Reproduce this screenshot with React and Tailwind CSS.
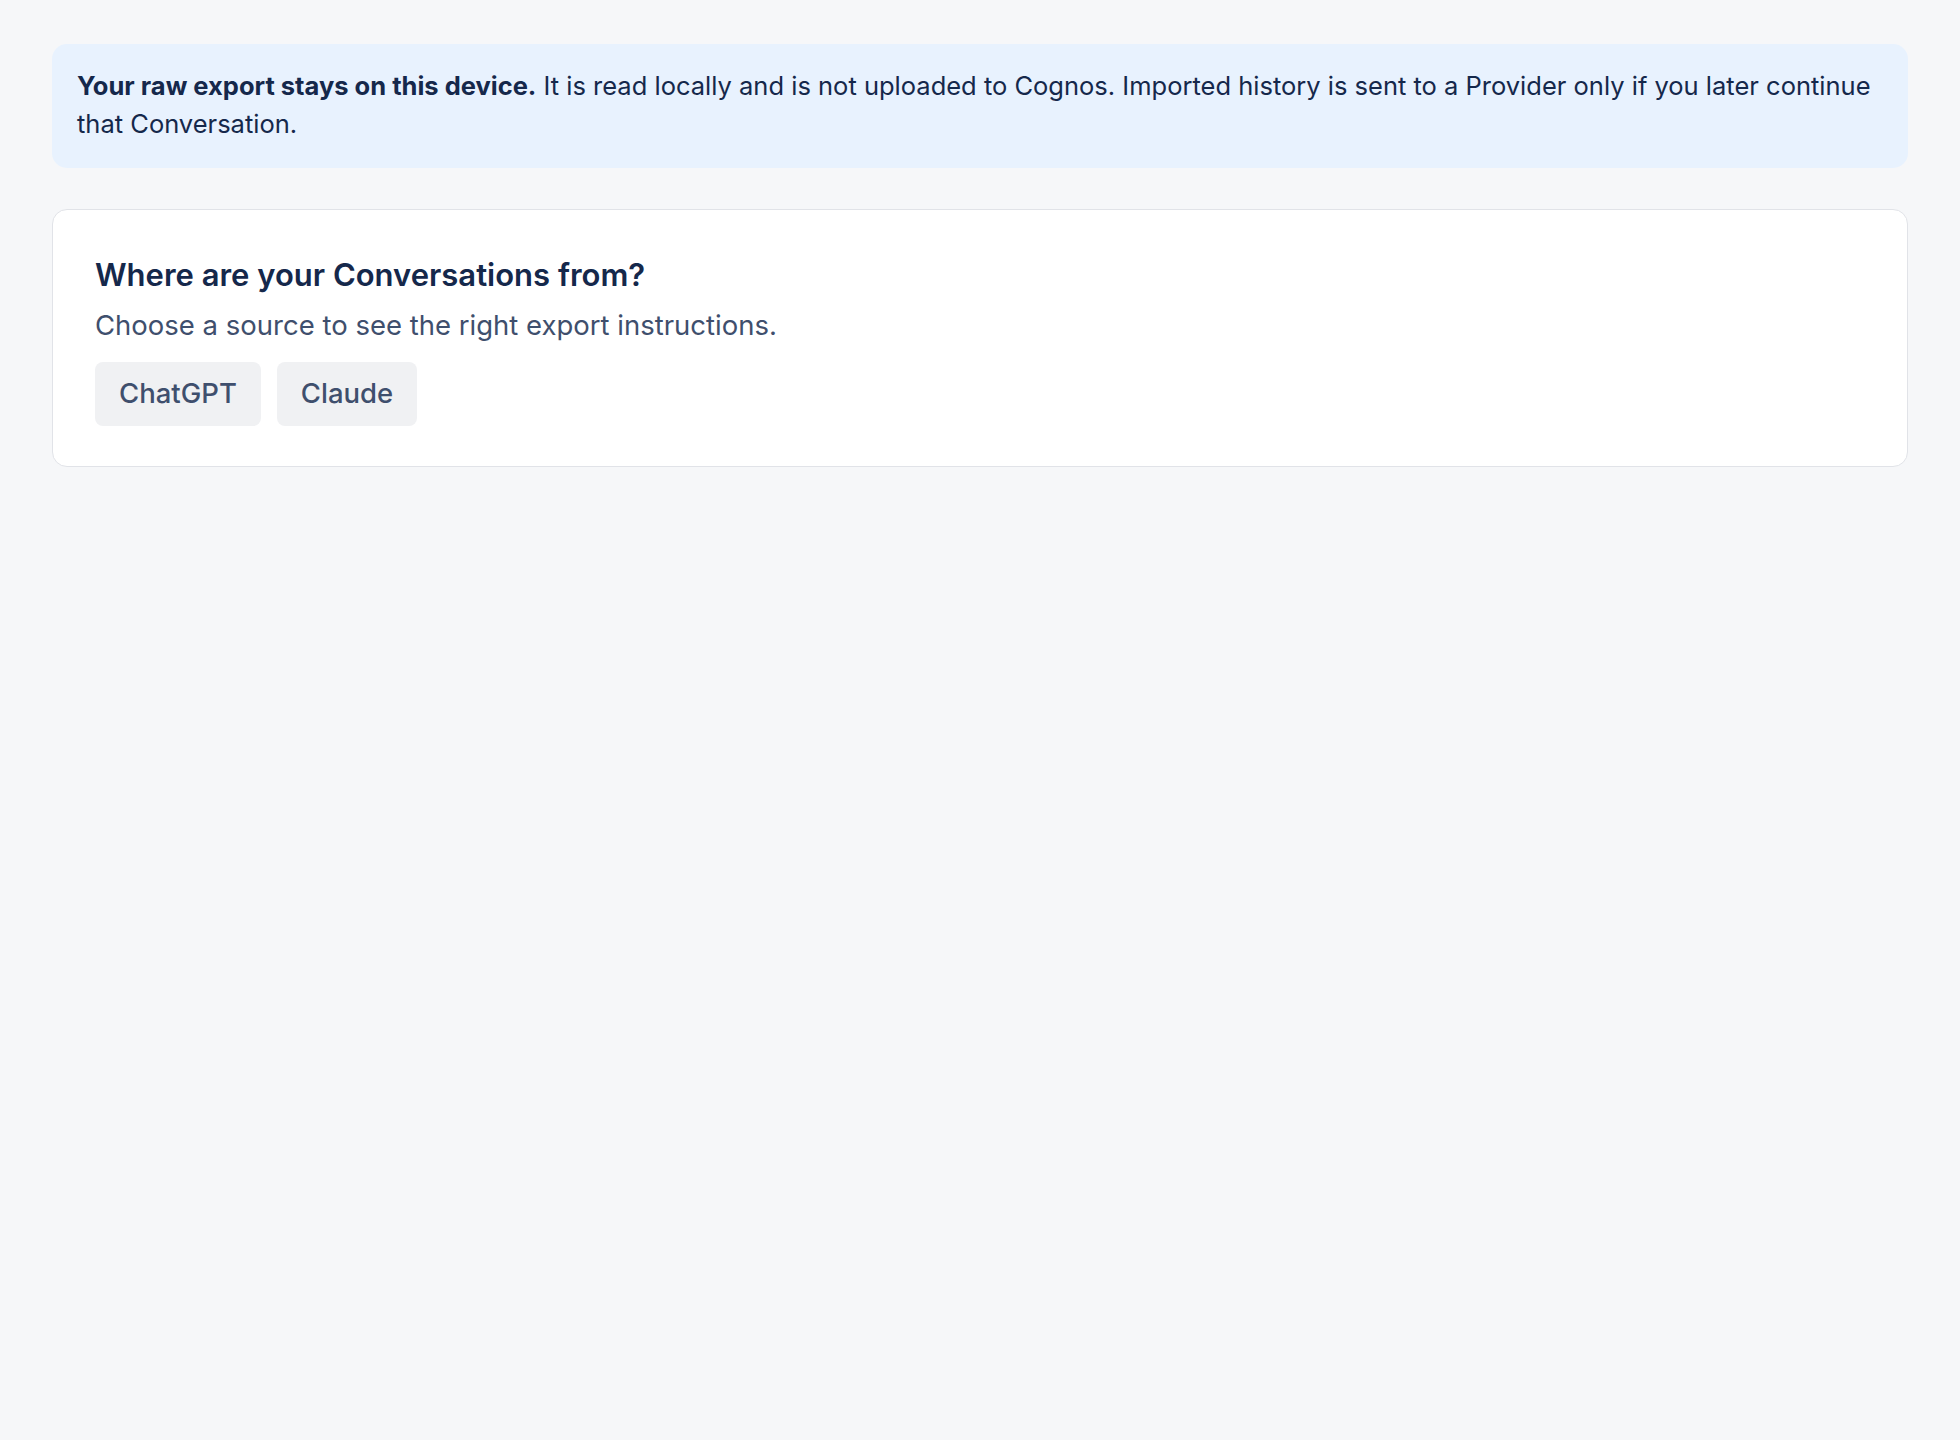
export default function App() {
  return (
    <div className="min-h-screen bg-[#f6f7f9] px-[52px] pt-[44px] font-['Inter',sans-serif] text-[#15284b]">
      <p className="rounded-[15px] bg-[#e8f2fe] px-[25px] pt-[23px] pb-[26px] text-[25.5px] leading-[37.5px]">
        <strong className="font-bold">Your raw export stays on this device.</strong> It is read locally and is not
        uploaded to Cognos. Imported history is sent to a Provider only if you later continue that Conversation.
      </p>

      <section className="mt-[41px] rounded-[15px] border border-[#e1e3e8] bg-white px-[42px] pt-[43px] pb-[40px]">
        <h2 className="text-[31px] font-semibold leading-[44px]">Where are your Conversations from?</h2>
        <p className="mt-[10px] text-[27.5px] leading-[37.5px] text-[#3f4f6d]">
          Choose a source to see the right export instructions.
        </p>
        <div className="mt-[17px] flex gap-4">
          <button className="h-[64px] rounded-[8px] bg-[#f0f1f3] px-[24px] text-[27.5px] font-medium text-[#3f4f6d]">
            ChatGPT
          </button>
          <button className="h-[64px] rounded-[8px] bg-[#f0f1f3] px-[24px] text-[27.5px] font-medium text-[#3f4f6d]">
            Claude
          </button>
        </div>
      </section>
    </div>
  );
}
